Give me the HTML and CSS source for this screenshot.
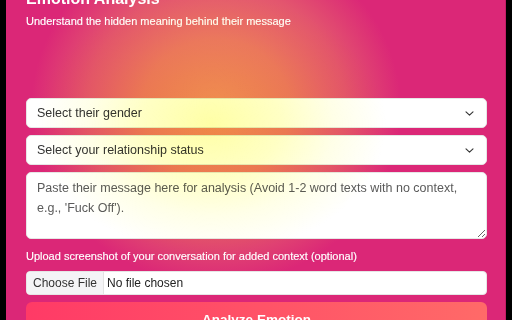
FILE: index.html
```html
<!DOCTYPE html>
<html lang="en">
<head>
<meta charset="utf-8">
<title>Emotion Analysis</title>
<link rel="stylesheet" href="styles.css">
</head>
<body>
<div class="frame">
  <main class="card">
    <header class="head">
      <h1 class="title">Emotion Analysis</h1>
      <p class="subtitle">Understand the hidden meaning behind their message</p>
    </header>
    <form class="form">
      <div class="select-wrap">
        <select class="field select">
          <option>Select their gender</option>
        </select>
        <svg class="chev" viewBox="0 0 9 5" width="9" height="5"><path d="M1 .8l3.5 3.4L8 .8" fill="none" stroke="#333" stroke-width="1.1" stroke-linecap="round" stroke-linejoin="round"/></svg>
      </div>
      <div class="select-wrap">
        <select class="field select">
          <option>Select your relationship status</option>
        </select>
        <svg class="chev" viewBox="0 0 9 5" width="9" height="5"><path d="M1 .8l3.5 3.4L8 .8" fill="none" stroke="#333" stroke-width="1.1" stroke-linecap="round" stroke-linejoin="round"/></svg>
      </div>
      <textarea class="field area" placeholder="Paste their message here for analysis (Avoid 1-2 word texts with no context, e.g., 'Fuck Off')."></textarea>
      <label class="upload-label" for="shot">Upload screenshot of your conversation for added context (optional)</label>
      <input class="file" id="shot" type="file">
      <button class="analyze" type="button">Analyze Emotion</button>
    </form>
    <div class="glow"></div>
  </main>
</div>
</body>
</html>
```

FILE: styles.css
```css
html, body {
  margin: 0;
  padding: 0;
  background: #000;
  height: 320px;
  overflow: hidden;
}

.frame {
  padding: 0 6px;
  height: 320px;
  overflow: hidden;
}

.card {
  position: relative;
  isolation: isolate;
  background:
    radial-gradient(ellipse 185px 175px at 210px 120px,
      #f08e70 0%,
      #eb7868 40%,
      #e3566e 70%,
      #db2777 100%),
    #db2777;
  padding: 0 19px 20px 20px;
  font-family: "Liberation Sans", Arial, sans-serif;
  box-shadow: inset -1px 0 0 #c21e66;
}

.title {
  margin: -11px 0 0;
  font-size: 16px;
  line-height: 20px;
  font-weight: 700;
  color: #fff;
}

.subtitle {
  margin: 5px 0 0;
  font-size: 11px;
  line-height: 14px;
  color: #fff;
  -webkit-text-stroke: 0.15px #fff;
}

.form {
  display: flex;
  flex-direction: column;
  margin-top: 70px;
}

.select-wrap {
  position: relative;
  margin-bottom: 7px;
}

.field {
  box-sizing: border-box;
  width: 100%;
  border: 1px solid #e6e6e6;
  border-radius: 5px;
  background: #fff;
  font-family: "Liberation Sans", Arial, sans-serif;
  font-size: 12.5px;
  color: #333;
  outline: none;
  margin: 0;
}

.select {
  appearance: none;
  -webkit-appearance: none;
  height: 30px;
  padding: 0 10px;
}

.chev {
  position: absolute;
  right: 13px;
  top: 13px;
}

.area {
  height: 67px;
  padding: 5px 10px;
  line-height: 20px;
  resize: vertical;
  display: block;
}

.area::placeholder {
  color: #5a5a5a;
}

.upload-label {
  margin-top: 10px;
  font-size: 11px;
  line-height: 14px;
  color: #fff;
  -webkit-text-stroke: 0.15px #fff;
}

.file {
  box-sizing: border-box;
  margin-top: 8px;
  width: 100%;
  height: 24px;
  background: #fff;
  border: 1px solid #e6e6e6;
  border-radius: 4px;
  font-family: "Liberation Sans", Arial, sans-serif;
  font-size: 12px;
  color: #222;
  padding: 0;
}

.file::file-selector-button {
  height: 22px;
  margin: 0 3px 0 0;
  padding: 0 6px;
  border: none;
  border-right: 1px solid #e3e3e3;
  background: #f4f4f6;
  color: #333;
  font-family: "Liberation Sans", Arial, sans-serif;
  font-size: 12px;
}

.analyze {
  margin-top: 7px;
  height: 36px;
  border: none;
  border-radius: 6px;
  background: linear-gradient(90deg, #ff3a66, #ff6a68);
  color: #fff;
  font-family: "Liberation Sans", Arial, sans-serif;
  font-size: 13.5px;
  font-weight: 700;
  padding: 0 0 2px;
}

.glow {
  position: absolute;
  inset: 0;
  pointer-events: none;
  mix-blend-mode: multiply;
  background: radial-gradient(ellipse 175px 130px at 205px 135px,
    rgba(255, 255, 150, 0.85) 0%,
    rgba(255, 255, 160, 0.62) 40%,
    rgba(255, 255, 170, 0.28) 70%,
    rgba(255, 255, 180, 0) 100%);
}
```
